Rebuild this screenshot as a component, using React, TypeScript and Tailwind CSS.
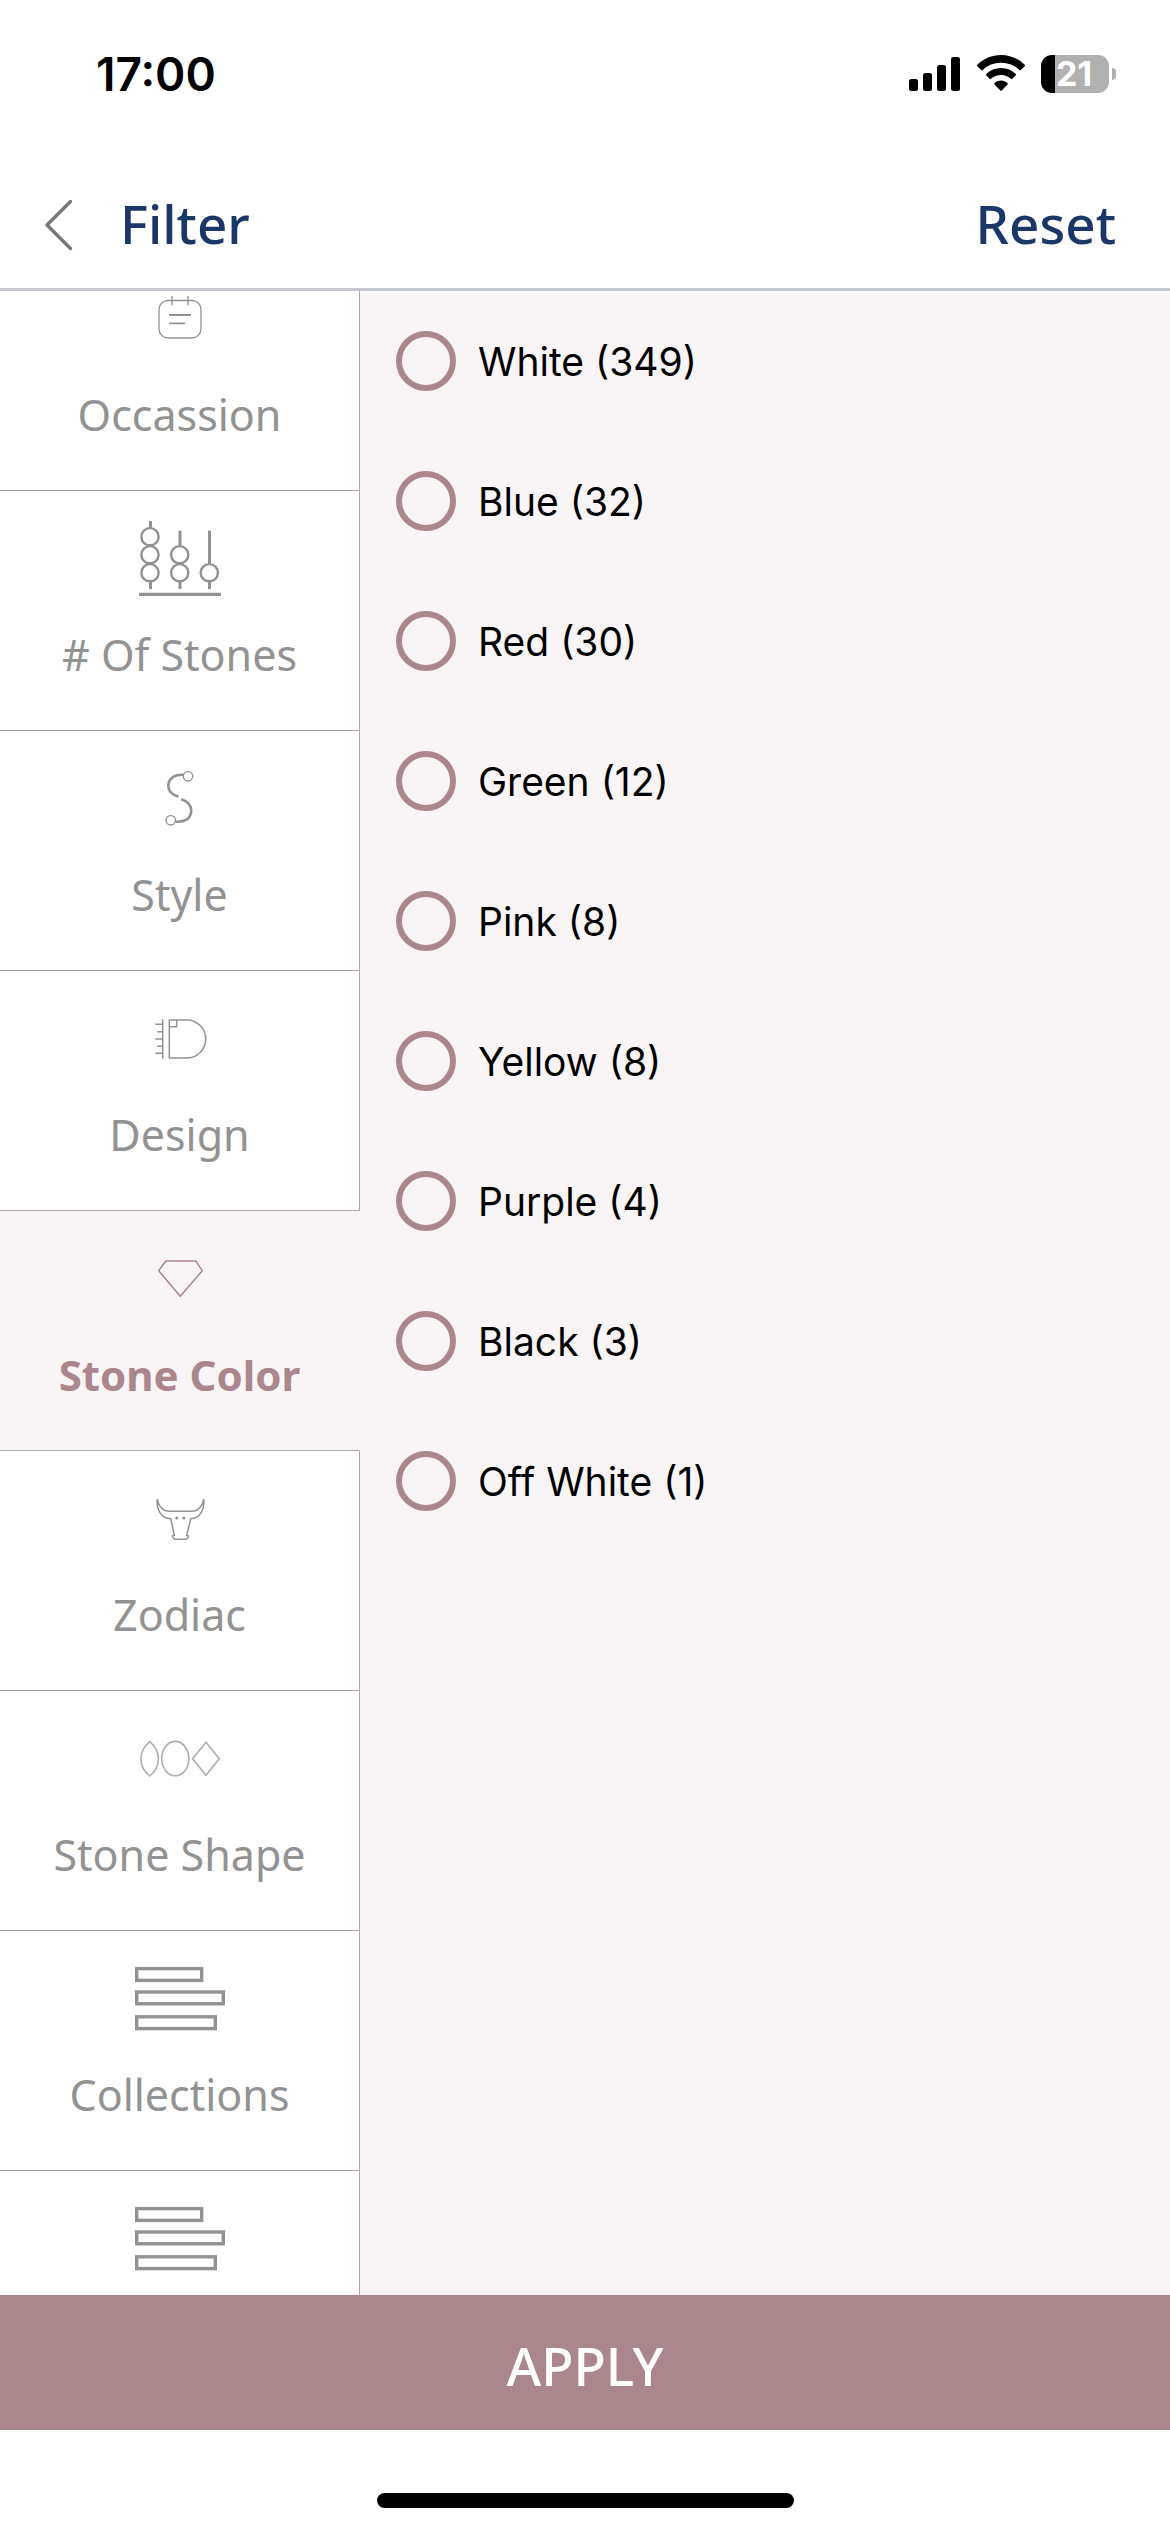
import type { ReactNode } from "react";

const sidebarText = "font-['Noto_Sans',sans-serif]";

function CalendarIcon() {
  return (
    <g strokeWidth="1.3">
      <rect x="24" y="27.5" width="42" height="37.5" rx="9" />
      <path d="M37 23v9.5M53 23v9.5" />
      <path d="M34 42h22M34 50.3h16" strokeWidth="1.8" />
    </g>
  );
}

function AbacusIcon() {
  return (
    <g strokeWidth="2.4">
      <circle cx="15" cy="23.7" r="8.6" />
      <circle cx="15" cy="41.7" r="8.6" />
      <circle cx="15" cy="59.7" r="8.6" />
      <circle cx="44.7" cy="41.7" r="8.6" />
      <circle cx="44.7" cy="59.7" r="8.6" />
      <circle cx="74.3" cy="59.7" r="8.6" />
      <path d="M15.5 8v7M15.5 69v7M45 17.7v15M45 69v7M74.5 17.7V51M74.5 69v7" strokeWidth="3" />
      <path d="M4 81.4h82" strokeWidth="3.2" />
    </g>
  );
}

function StyleIcon() {
  return (
    <g strokeWidth="2.6">
      <circle cx="53" cy="23.3" r="4.7" strokeWidth="1.4" />
      <circle cx="35.7" cy="67.3" r="4.7" strokeWidth="1.4" />
      <path d="M48.3 21.8C38.5 21.3 33.3 26.5 33.3 32.8C33.3 38.5 37.5 42 43.5 43.6" />
      <path d="M46.2 46.2C52.5 48.3 56.4 52 56.2 58C55.8 65.5 50.5 69.3 40.3 68.6" />
    </g>
  );
}

function DesignIcon() {
  return (
    <g strokeWidth="1.5">
      <path d="M27.7 26.3v39.4M20.3 31.3h7.4M22.3 38.7h5.4M20.3 46h7.4M22.3 53.3h5.4M20.3 60.3h7.4" />
      <path d="M34.3 27h17.4a19 19 0 0 1 0 38H34.3z" />
      <path d="M41.7 27v6.8h-7.4" />
    </g>
  );
}

function GemIcon() {
  return <path d="M30.7 28h30l6.6 9.7-22 25.6-21.6-25.6z" strokeWidth="1.5" />;
}

function BullIcon() {
  return (
    <g strokeWidth="1.5">
      <path d="M22.3 26C23.3 33.5 28.5 38.3 34.3 38.3h22.4C62.5 38.3 67.7 33.5 68.7 26C70 36.5 65 45.5 55.8 45.7L51.7 62.3l2 .8-2.2 3.2H39.5l-2.2-3.2 2-.8L35.7 45.7C26 45.5 21 36.5 22.3 26z" />
      <circle cx="41.7" cy="45" r="1.6" fill="currentColor" stroke="none" />
      <circle cx="48.8" cy="45" r="1.6" fill="currentColor" stroke="none" />
    </g>
  );
}

function ShapesIcon() {
  return (
    <g strokeWidth="1.6" opacity="0.75">
      <path d="M14.7 28.7C26.3 38.5 26.3 53.3 14.7 63C3 53.3 3 38.5 14.7 28.7z" />
      <ellipse cx="40.3" cy="45.6" rx="13.6" ry="17.2" />
      <path d="M71 29.3l13.3 16.4L71 62.2 57.6 45.7z" />
    </g>
  );
}

function ListIcon() {
  return (
    <g strokeWidth="3.4">
      <rect x="1.7" y="15.6" width="65" height="11.8" />
      <rect x="1.7" y="39" width="86.6" height="11.8" />
      <rect x="1.7" y="63.8" width="78.6" height="11.8" />
    </g>
  );
}

type Category = { name: string; label?: string; icon: ReactNode; active?: boolean };

const categories: Category[] = [
  { name: "occasion", label: "Occassion", icon: <CalendarIcon /> },
  { name: "stones", label: "# Of Stones", icon: <AbacusIcon /> },
  { name: "style", label: "Style", icon: <StyleIcon /> },
  { name: "design", label: "Design", icon: <DesignIcon /> },
  { name: "color", label: "Stone Color", icon: <GemIcon />, active: true },
  { name: "zodiac", label: "Zodiac", icon: <BullIcon /> },
  { name: "shape", label: "Stone Shape", icon: <ShapesIcon /> },
  { name: "collections", label: "Collections", icon: <ListIcon /> },
  { name: "more", icon: <ListIcon /> },
];

const colors = [
  { name: "White", count: 349 },
  { name: "Blue", count: 32 },
  { name: "Red", count: 30 },
  { name: "Green", count: 12 },
  { name: "Pink", count: 8 },
  { name: "Yellow", count: 8 },
  { name: "Purple", count: 4 },
  { name: "Black", count: 3 },
  { name: "Off White", count: 1 },
];

function StatusBar() {
  return (
    <div className="flex h-[148px] shrink-0 items-center justify-between pl-24 pr-[54px] text-black">
      <span className="text-[46px] font-semibold leading-none">17:00</span>
      <div className="flex items-center gap-4">
        <svg width="52" height="38" viewBox="0 0 52 38" fill="currentColor" aria-hidden="true">
          <rect x="0" y="24" width="9" height="12" rx="2.5" />
          <rect x="14" y="18" width="9" height="18" rx="2.5" />
          <rect x="28" y="10" width="9" height="26" rx="2.5" />
          <rect x="42" y="2" width="9" height="34" rx="2.5" />
        </svg>
        <svg width="48" height="38" viewBox="0 0 48 38" fill="currentColor" aria-hidden="true">
          <path d="M24 0C15 0 6.500 3.600 0.300 9.800a1 1 0 0 0 0 1.400L4.200 15.100a1 1 0 0 0 1.400 0A26.500 26.500 0 0 1 42.400 15.100a1 1 0 0 0 1.400 0L47.700 11.200a1 1 0 0 0 0-1.400C41.500 3.600 33 0 24 0z" />
          <path d="M24 13C18.300 13 13.100 15.200 9.200 18.900a1 1 0 0 0 0 1.400L12.600 23.800a1 1 0 0 0 1.400 0A14.800 14.800 0 0 1 34 23.800a1 1 0 0 0 1.400 0L38.800 20.300a1 1 0 0 0 0-1.400C34.900 15.200 29.700 13 24 13z" />
          <path d="M24 25.500C21.500 25.500 19.300 26.500 17.500 28a1 1 0 0 0 0 1.400L23.300 35.600a1 1 0 0 0 1.400 0L30.500 29.400a1 1 0 0 0 0-1.400C28.700 26.500 26.500 25.500 24 25.500z" />
        </svg>
        <div className="flex items-center gap-[3px]">
          <div className="flex h-[38px] w-[68px] items-center rounded-[11px] bg-linear-to-r from-black from-[21%] to-[#b1b1b1] to-[21%] pl-[15px] text-[34px] font-bold leading-[38px] text-white">
            21
          </div>
          <div className="h-3 w-1 rounded-r-full bg-[#b1b1b1]" />
        </div>
      </div>
    </div>
  );
}

export default function App() {
  return (
    <div className="flex h-screen flex-col bg-white font-[Inter,sans-serif]">
      <StatusBar />

      {/* Title bar */}
      <header
        className={`mt-3.5 flex shrink-0 items-center justify-between border-b-3 border-[#c5c6d0] pl-11 pr-[54px] text-[#1a3767] ${sidebarText}`}
      >
        <div className="flex h-[126px] items-center gap-[46px]">
          <button type="button" aria-label="Back" className="text-[#777]">
            <svg width="30" height="52" viewBox="0 0 30 52" fill="none" stroke="currentColor" strokeWidth="3.4" strokeLinecap="round" strokeLinejoin="round">
              <path d="M26.5 2.500L3 26l23.500 23.500" />
            </svg>
          </button>
          <h1 className="pb-0.5 text-[53px] font-medium leading-[72px]">Filter</h1>
        </div>
        <button type="button" className="pb-0.5 text-[53px] font-medium leading-[72px]">
          Reset
        </button>
      </header>

      <main className="flex min-h-0 flex-1 bg-[#f9f5f6]">
        {/* Filter categories, scrolled down a little */}
        <nav className="w-[360px] shrink-0 overflow-hidden">
          <div className="-mt-10 flex flex-col">
            {categories.map((c) => (
              <button
                key={c.name}
                type="button"
                aria-label={c.label ?? "More collections"}
                className={`flex h-60 shrink-0 flex-col items-center border-b border-r border-b-[#a6a6a9] pt-[22px] ${sidebarText} ${
                  c.active
                    ? "border-r-transparent text-[42px] font-bold text-[#ab868d]"
                    : "border-r-[#a6a6a9] bg-white text-[43px] text-[#929292]"
                }`}
              >
                <svg width="90" height="90" viewBox="0 0 90 90" fill="none" stroke="currentColor" aria-hidden="true">
                  {c.icon}
                </svg>
                {c.label && <span className="mt-5 leading-[64px]">{c.label}</span>}
              </button>
            ))}
          </div>
        </nav>

        {/* Options of the selected category */}
        <fieldset className="flex-1 pl-9">
          {colors.map((color) => (
            <label key={color.name} className="flex h-[140px] items-center gap-[22px] text-[39px] text-black">
              <input
                type="checkbox"
                className="size-[60px] shrink-0 appearance-none rounded-full border-6 border-[#ab868d] checked:bg-[#ab868d]"
              />
              <span className="pt-0.5">
                {color.name} ({color.count})
              </span>
            </label>
          ))}
        </fieldset>
      </main>

      <button
        type="button"
        className={`h-[135px] shrink-0 bg-[#ab868d] pt-1.5 text-[53px] font-medium text-white ${sidebarText}`}
      >
        APPLY
      </button>

      {/* Home indicator */}
      <div className="flex shrink-0 justify-center pb-6 pt-[63px]">
        <div className="h-[15px] w-[417px] rounded-full bg-black" />
      </div>
    </div>
  );
}
